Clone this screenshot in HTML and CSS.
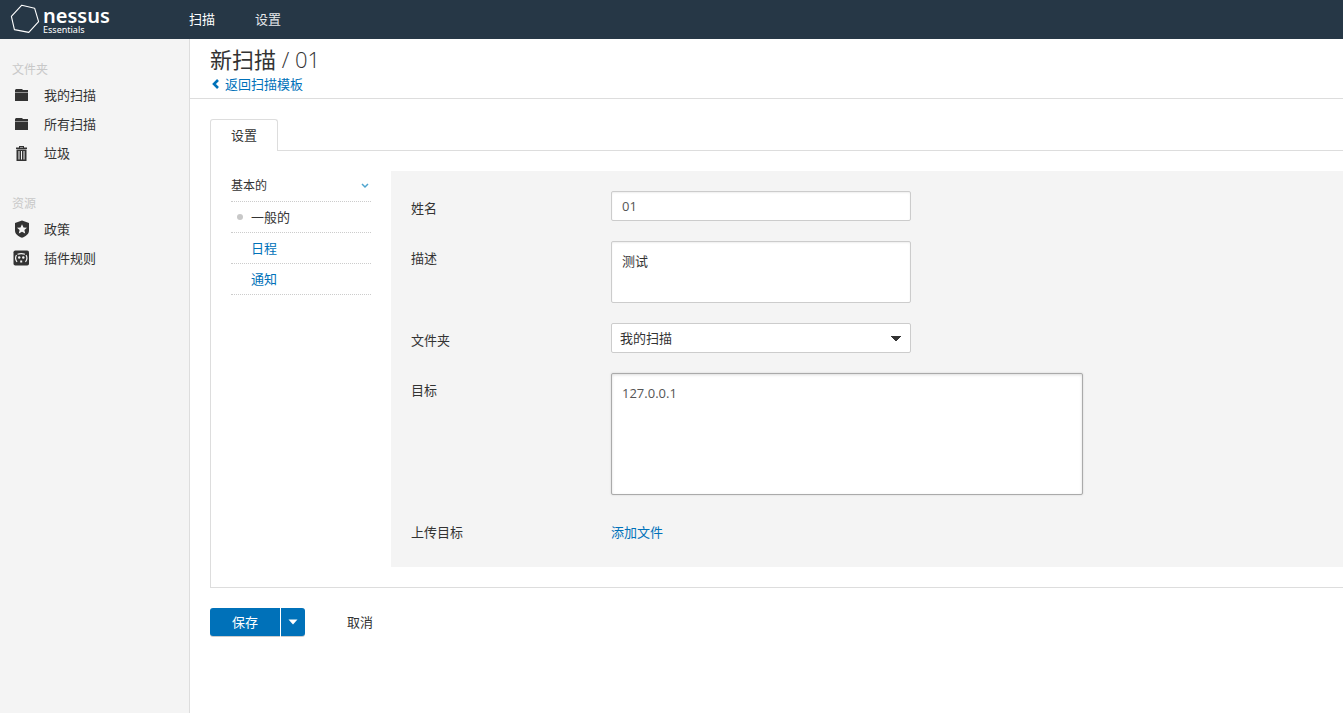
FILE: index.html
```html
<!DOCTYPE html>
<html lang="zh-CN">
<head>
<meta charset="utf-8">
<title>新扫描 / 01</title>
<link rel="stylesheet" href="styles.css">
</head>
<body>
<header class="topbar">
  <a class="brand" href="#">
    <svg class="brand-mark" width="30" height="30" viewBox="0 0 30 30" fill="none" stroke="#fff" stroke-width="1.1" stroke-linejoin="round"><path d="M11.8 1.2 24.6 4.2 28.6 17.6 18.8 28.4 4.4 25.6 1.4 12.4Z"/></svg>
    <span class="brand-text"><span class="brand-name">nessus</span><span class="brand-edition">Essentials</span></span>
  </a>
  <nav class="topnav">
    <a class="active" href="#">扫描</a>
    <a href="#">设置</a>
  </nav>
</header>
<div class="layout">
  <aside class="sidebar">
    <h2>文件夹</h2>
    <ul>
      <li><a href="#"><svg class="icon" viewBox="0 0 18 18"><path d="M4 3h6l1 1h5v2H3V4zM3 6.500h13V15H3z"/></svg>我的扫描</a></li>
      <li><a href="#"><svg class="icon" viewBox="0 0 18 18"><path d="M4 3h6l1 1h5v2H3V4zM3 6.500h13V15H3z"/></svg>所有扫描</a></li>
      <li><a href="#"><svg class="icon" viewBox="0 0 18 18"><path fill-rule="evenodd" d="M7 2h5v1.500h3V5H4V3.500h3zM8 3v.5h3V3zM4.500 5.500h10V17h-10zM6.500 7v8.500h1V7zM9 7v8.500h1V7zM11.500 7v8.500h1V7z"/></svg>垃圾</a></li>
    </ul>
    <h2>资源</h2>
    <ul>
      <li><a href="#"><svg class="icon" viewBox="0 0 18 18"><path fill-rule="evenodd" d="M10 .6 17 3v7.500c0 3.500-3 5.600-7 7.300-4-1.700-7-3.800-7-7.300V3zM10 4.200 8.500 7.500 5 7.800l2.600 2.300-.8 3.500L10 11.800l3.200 1.800-.8-3.500L15 7.800l-3.500-.3z"/></svg>政策</a></li>
      <li><a href="#"><svg class="icon" viewBox="0 0 18 18"><rect x="1.500" y="1.500" width="15.500" height="15" rx="1.800"/><g fill="none" stroke="#f4f4f4" stroke-width="1.200"><path d="M5.500 5.200Q9.200 3.900 13 5.200M4.500 6Q2.400 9.500 5 13M14 6q2.100 3.500-.5 7"/></g><g fill="#f4f4f4"><circle cx="7.200" cy="8.500" r="1.200"/><circle cx="11.300" cy="8.500" r="1.200"/><path d="M8.200 11.500h2v2h-2z"/></g></svg>插件规则</a></li>
    </ul>
  </aside>
  <main class="main">
    <div class="page-head">
      <h1>新扫描 <span class="light">/ 01</span></h1>
      <a class="back" href="#"><svg width="10" height="10" viewBox="0 0 10 10" fill="none" stroke="currentColor" stroke-width="2.600"><path d="M8 1 4 5l4 4"/></svg>返回扫描模板</a>
    </div>
    <form class="editor">
      <div class="tabs"><button type="button" class="tab">设置</button></div>
      <div class="panel">
        <nav class="subnav">
          <button type="button" class="group">基本的<svg width="8" height="6" viewBox="0 0 8 6" fill="none" stroke="#4ea5cf" stroke-width="1.500"><path d="M1 1l3 3 3-3"/></svg></button>
          <a class="current" href="#">一般的</a>
          <a href="#">日程</a>
          <a href="#">通知</a>
        </nav>
        <div class="fields">
          <div class="row"><label for="name">姓名</label><input class="control" id="name" type="text" value="01"></div>
          <div class="row"><label for="desc">描述</label><textarea class="control desc" id="desc">测试</textarea></div>
          <div class="row"><label for="folder">文件夹</label><select class="control" id="folder"><option>我的扫描</option></select></div>
          <div class="row"><label for="targets">目标</label><textarea class="control targets" id="targets">127.0.0.1</textarea></div>
          <div class="row upload"><span class="label">上传目标</span><a class="add" href="#">添加文件</a></div>
        </div>
      </div>
      <div class="actions">
        <button type="button" class="save">保存</button>
        <button type="button" class="more" aria-label="更多"><svg width="10" height="6" viewBox="0 0 10 6"><path fill="#fff" d="M.5.500h9L5 5.500z"/></svg></button>
        <button type="button" class="cancel">取消</button>
      </div>
    </form>
  </main>
</div>
</body>
</html>
```

FILE: styles.css
```css
* { box-sizing: border-box; }
body {
  margin: 0;
  min-height: 100vh;
  display: flex;
  flex-direction: column;
  overflow-x: hidden;
  background: #fff;
  color: #333;
  font: 13px/20px "Open Sans", "Noto Sans CJK SC", sans-serif;
}
a { color: #0071b9; text-decoration: none; }
button, input, textarea, select { font: inherit; color: inherit; margin: 0; }
button { border: 0; background: none; padding: 0; cursor: pointer; }
h1, h2, ul { margin: 0; padding: 0; font-weight: 400; list-style: none; }
svg { flex: none; }

.topbar { display: flex; height: 39px; background: #263746; }
.brand { display: flex; width: 156px; padding: 4px 0 0 10px; gap: 3px; color: #fff; }
.brand-text { display: flex; flex-direction: column; padding-top: 2px; }
.brand-name { font: 600 20px/19px "Noto Sans", sans-serif; }
.brand-edition { font: 9px/10px "Noto Sans", sans-serif; }
.topnav { display: flex; }
.topnav a { padding: 0 7px 0 33px; line-height: 38px; color: #e5e8ea; }
.topnav .active { color: #fff; }

.layout { display: flex; flex: 1; }
.sidebar { flex: none; width: 190px; padding-top: 20px; background: #f4f4f4; border-right: 1px solid #ddd; }
.sidebar h2 { padding: 1px 0 0 12px; font-size: 12px; line-height: 20px; color: #c8c8c8; }
.sidebar ul { margin-bottom: 26px; }
.sidebar li a { display: flex; align-items: center; gap: 14px; height: 29px; padding-left: 12px; color: #333; }
.icon { width: 18px; height: 18px; fill: #333; }

.main { flex: 1; min-width: 0; }
.page-head { height: 60px; padding: 5px 20px 0; border-bottom: 1px solid #ddd; }
h1 { font-size: 22px; line-height: 30px; }
.light { font-weight: 300; }
.back { display: flex; align-items: center; gap: 5px; }

.editor { padding: 20px 0 20px 20px; }
.tabs { display: flex; }
.tab { height: 32px; padding: 0 20px 2px; margin-bottom: -1px; background: #fff; border: 1px solid #ddd; border-bottom: 0; border-radius: 3px 3px 0 0; z-index: 1; }
.panel { display: flex; gap: 20px; padding: 20px 0 20px 20px; border: 1px solid #ddd; border-right: 0; }
.subnav { flex: none; width: 140px; }
.subnav > * { display: flex; align-items: center; width: 100%; height: 31px; padding: 0 0 1px 20px; border-bottom: 1px dotted #ccc; }
.subnav .group { justify-content: space-between; padding: 0 2px 0 0; font-size: 12px; }
.subnav .current { padding-left: 6px; color: #333; }
.current::before { content: ""; width: 6px; height: 6px; margin-right: 8px; border-radius: 50%; background: #c8c8c8; }

.fields { flex: 1; display: flex; flex-direction: column; gap: 20px; padding: 20px; background: #f4f4f4; }
.row { display: flex; align-items: flex-start; }
.row label, .label { flex: none; width: 200px; padding-top: 7px; }
.control { width: 300px; height: 30px; padding: 4px 10px; color: #555; background: #fff; border: 1px solid #ccc; border-radius: 2px; box-shadow: inset 0 1px 2px #eee; outline: 0; resize: none; }
textarea.control { padding-top: 9px; }
.desc { height: 62px; color: #333; }
.targets { width: 472px; height: 122px; border-color: #aaa; box-shadow: inset 0 1px 3px #ddd, 0 0 2px #ccc; }
select.control {
  appearance: none;
  padding: 0 8px 1px;
  color: #333;
  background:
    linear-gradient(to bottom right, #333 50%, transparent 51%) right 9px center / 5px 5px no-repeat,
    linear-gradient(to bottom left, #333 50%, transparent 51%) right 14px center / 5px 5px no-repeat,
    #fff;
  box-shadow: none;
}
.upload { min-height: 32px; }
.add { padding-top: 7px; }

.actions { display: flex; gap: 1px; padding-top: 20px; }
.save, .more { height: 28px; color: #fff; background: #0071b9; box-shadow: 0 1px 0 #ccc; }
.save { width: 70px; padding-bottom: 1px; border-radius: 3px 0 0 3px; }
.more { display: flex; align-items: center; justify-content: center; width: 24px; border-radius: 0 3px 3px 0; }
.cancel { padding: 0 20px 1px; margin-left: 21px; }
```
